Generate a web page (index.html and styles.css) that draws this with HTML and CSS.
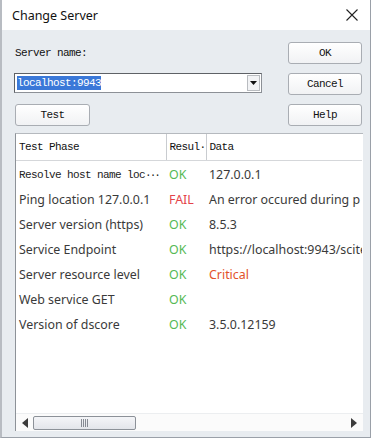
FILE: index.html
```html
<!DOCTYPE html>
<html>
<head>
    <title>Change Server</title>
    <meta charset="UTF-8">
    <link rel="stylesheet" href="styles.css">
</head>
<body>
    <div class="dialog">
        <!-- Title bar -->
        <div class="title-bar">
            <span class="title">Change Server</span>
            <svg class="close-icon" width="12" height="12" viewBox="0 0 12 12">
                <path d="M0.5 0.5 L11.5 11.5 M11.5 0.5 L0.5 11.5" stroke="#222" stroke-width="1.1" fill="none"/>
            </svg>
        </div>

        <div class="content">
            <div class="top-grid">
                <label class="mono-label" for="serverName">Server name:</label>
                <button class="win-button">OK</button>

                <div class="combo">
                    <span class="combo-text"><span class="selected">localhost:9943</span></span>
                    <span class="combo-arrow">
                        <svg width="7" height="4" viewBox="0 0 7 4"><path d="M0 0 H7 L3.5 4 Z" fill="#111"/></svg>
                    </span>
                </div>
                <button class="win-button">Cancel</button>

                <button class="win-button test-button">Test</button>
                <button class="win-button">Help</button>
            </div>

            <div class="results">
                <table class="results-table">
                    <colgroup>
                        <col class="col-phase">
                        <col class="col-result">
                        <col>
                    </colgroup>
                    <thead>
                        <tr>
                            <th>Test Phase</th>
                            <th>Resul·</th>
                            <th>Data</th>
                        </tr>
                    </thead>
                    <tbody>
                        <tr>
                            <td class="mono">Resolve host name loc<span class="dots">···</span></td>
                            <td class="ok">OK</td>
                            <td>127.0.0.1</td>
                        </tr>
                        <tr>
                            <td>Ping location 127.0.0.1</td>
                            <td class="fail">FAIL</td>
                            <td>An error occured during p</td>
                        </tr>
                        <tr>
                            <td>Server version (https)</td>
                            <td class="ok">OK</td>
                            <td>8.5.3</td>
                        </tr>
                        <tr>
                            <td>Service Endpoint</td>
                            <td class="ok">OK</td>
                            <td>https://localhost:9943/scite</td>
                        </tr>
                        <tr>
                            <td>Server resource level</td>
                            <td class="ok">OK</td>
                            <td class="critical">Critical</td>
                        </tr>
                        <tr>
                            <td>Web service GET</td>
                            <td class="ok">OK</td>
                            <td></td>
                        </tr>
                        <tr>
                            <td>Version of dscore</td>
                            <td class="ok">OK</td>
                            <td>3.5.0.12159</td>
                        </tr>
                    </tbody>
                </table>

                <div class="hscroll">
                    <svg class="scroll-arrow" width="6" height="10" viewBox="0 0 6 10"><path d="M6 0 V10 L0 5 Z" fill="#3c3c3c"/></svg>
                    <div class="scroll-track">
                        <div class="scroll-thumb">
                            <svg width="7" height="8" viewBox="0 0 7 8"><path d="M0.5 0 V8 M2.5 0 V8 M4.5 0 V8 M6.5 0 V8" stroke="#7a7f88" stroke-width="0.9"/></svg>
                        </div>
                    </div>
                    <svg class="scroll-arrow" width="6" height="10" viewBox="0 0 6 10"><path d="M0 0 V10 L6 5 Z" fill="#3c3c3c"/></svg>
                </div>
            </div>
        </div>
    </div>
</body>
</html>
```

FILE: styles.css
```css
body {
    margin: 0;
    background: #fff;
    font-family: "Noto Sans", Arial, sans-serif;
    color: #333;
}
.dialog {
    width: 368px;
    height: 437px;
    border-left: 2px solid #b8bcc2;
    border-right: 1px solid #9aa0a8;
    border-bottom: 1px solid #9aa0a8;
    background: #e8ecf0;
    display: flex;
    flex-direction: column;
}
.title-bar {
    height: 30px;
    background: #fff;
    display: flex;
    align-items: center;
    justify-content: space-between;
    padding: 0 12px 0 10px;
}
.title {
    font-size: 12.5px;
    color: #111;
}
.close-icon {
    display: block;
    margin-top: -1px;
}
.content {
    flex: 1;
    padding: 12px 7px 6px 12px;
    display: flex;
    flex-direction: column;
    gap: 7px;
}
.top-grid {
    display: grid;
    grid-template-columns: 248px 74px;
    grid-template-rows: 22px 22px 22px;
    column-gap: 26px;
    row-gap: 9px;
}
.mono-label, .win-button, .results-table th, .results-table td.mono {
    font-family: "Liberation Mono", "DejaVu Sans Mono", monospace;
    font-size: 11px;
    letter-spacing: -0.6px;
    color: #111;
}
.mono-label {
    align-self: center;
    padding-left: 1px;
}
.win-button {
    height: 22px;
    border: 1px solid #a9adb3;
    border-radius: 3px;
    background: linear-gradient(#ffffff, #f1f2f4);
    padding: 0;
    text-align: center;
}
.test-button {
    width: 75px;
    margin-left: 1px;
}
.combo {
    height: 20px;
    border: 1px solid #8c9096;
    border-top-color: #5e6166;
    border-left-color: #5e6166;
    background: #fff;
    display: flex;
    align-items: center;
    box-sizing: border-box;
}
.combo-text {
    flex: 1;
    padding-left: 2px;
    font-family: "Liberation Mono", "DejaVu Sans Mono", monospace;
    font-size: 11px;
    letter-spacing: -0.6px;
}
.selected {
    background: #3a78d8;
    color: #fff;
    padding: 1px 0;
}
.combo-arrow {
    width: 13px;
    height: 16px;
    margin-right: 1px;
    border: 1px solid #b9bcc0;
    background: #f2f3f5;
    display: flex;
    align-items: center;
    justify-content: center;
    box-sizing: border-box;
}
.results {
    flex: 1;
    margin-left: 1px;
    background: #fff;
    border-left: 1px solid #8d9298;
    border-top: 1px solid #b5b9be;
    display: flex;
    flex-direction: column;
    overflow: hidden;
}
.results-table {
    width: 346px;
    table-layout: fixed;
    border-collapse: collapse;
}
.col-phase {
    width: 150px;
}
.col-result {
    width: 40px;
}
.results-table th {
    height: 26px;
    text-align: left;
    font-weight: normal;
    padding: 0 3px;
    border-right: 1px solid #c9ccd0;
    border-bottom: 1px solid #d5d7da;
    white-space: nowrap;
    overflow: hidden;
}
.results-table th:last-child {
    border-right: none;
}
.results-table td {
    height: 25px;
    padding: 0 3px;
    font-size: 12.4px;
    color: #3a3a3a;
    white-space: nowrap;
    overflow: hidden;
}
.results-table tbody tr:first-child td {
    padding-top: 1px;
}
.results-table td.mono {
    color: #222;
}
.dots {
    letter-spacing: -2px;
}
.ok {
    color: #55b955 !important;
}
.fail {
    color: #e4434a !important;
}
.critical {
    color: #e2522a !important;
}
.hscroll {
    margin-top: auto;
    height: 17px;
    background: #fbfbfb;
    border-top: 1px solid #eceef0;
    display: flex;
    align-items: center;
    padding: 0 6px 0 6px;
    gap: 5px;
}
.scroll-track {
    flex: 1;
    height: 14px;
}
.scroll-thumb {
    width: 103px;
    height: 14px;
    border: 1px solid #8c9198;
    border-radius: 2px;
    background: linear-gradient(#f4f5f8, #e3e5ea);
    display: flex;
    align-items: center;
    justify-content: center;
    box-sizing: border-box;
}
```
